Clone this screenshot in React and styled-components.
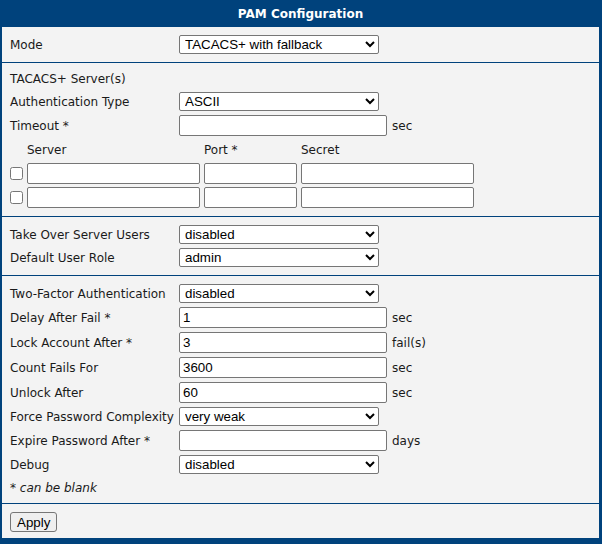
import React from 'react'
import styled, { createGlobalStyle } from 'styled-components'

const Global = createGlobalStyle`
    html, body {
        margin: 0;
        padding: 0;
        background: #ffffff;
    }
`

const Panel = styled.div`
    width: 602px;
    height: 544px;
    box-sizing: border-box;
    border-left: 2px solid #00427c;
    border-right: 3px solid #00427c;
    border-bottom: 6px solid #00427c;
    background-color: #f3f3f3;
    font-family: "DejaVu Sans", Verdana, sans-serif;
    font-size: 12px;
    color: #1a1a1a;
`

const Title = styled.div`
    height: 27px;
    background-color: #00427c;
    color: #ffffff;
    font-weight: bold;
    font-size: 12px;
    display: flex;
    align-items: center;
    justify-content: center;
`

const Section = styled.div`
    padding: ${p => p.$pad || '6px 8px'};
    border-top: ${p => (p.$first ? 'none' : '1px solid #00427c')};
`

const Row = styled.div`
    display: flex;
    align-items: center;
    height: ${p => p.$h || 23}px;
`

const Label = styled.div`
    width: 169px;
    flex-shrink: 0;
    white-space: nowrap;
`

const Select = styled.select`
    width: 200px;
    height: 19px;
    box-sizing: border-box;
    font-family: "Liberation Sans", Arial, sans-serif;
    font-size: 13.33px;
    color: #000;
    background: #fff;
    border: 1px solid #767676;
    border-radius: 2px;
    padding: 0 0 0 1px;
    margin: 0;
`

const Input = styled.input`
    width: ${p => p.$w || 208}px;
    height: 21px;
    box-sizing: border-box;
    font-family: "Liberation Sans", Arial, sans-serif;
    font-size: 13.33px;
    color: #000;
    background: #fff;
    border: 1px solid #767676;
    border-radius: 2px;
    padding: 1px 3px;
    margin: 0;
`

const Unit = styled.span`
    margin-left: 5px;
`

const ServerGrid = styled.div`
    display: grid;
    grid-template-columns: 13px 173px 93px 173px;
    grid-template-rows: 23px 24px 24px;
    column-gap: 4px;
    align-items: center;
`

const Head = styled.div`
    grid-column: ${p => p.$col};
`

const Check = styled.input`
    width: 13px;
    height: 13px;
    margin: 0;
`

const Note = styled.div`
    font-style: italic;
`

const Button = styled.button`
    height: 20px;
    padding: 0 6px;
    font-family: "Liberation Sans", Arial, sans-serif;
    font-size: 13.33px;
    color: #000;
    background: #efefef;
    border: 1px solid #767676;
    border-radius: 3px;
    margin: 0;
`

const SelectRow = ({ label, value }) => (
  <Row>
    <Label>{label}</Label>
    <Select defaultValue={value}>
      <option>{value}</option>
    </Select>
  </Row>
)

const InputRow = ({ label, value, unit }) => (
  <Row $h={25}>
    <Label>{label}</Label>
    <Input defaultValue={value} />
    {unit && <Unit>{unit}</Unit>}
  </Row>
)

const ServerRow = () => (
  <>
    <Check type="checkbox" />
    <Input $w={173} />
    <Input $w={93} />
    <Input $w={173} />
  </>
)

export default function App() {
  return (
    <>
      <Global />
      <Panel>
        <Title>PAM Configuration</Title>
        <Section $first>
          <SelectRow label="Mode" value="TACACS+ with fallback" />
        </Section>
        <Section $pad="4px 8px 7px">
          <Row>TACACS+ Server(s)</Row>
          <SelectRow label="Authentication Type" value="ASCII" />
          <InputRow label="Timeout *" value="" unit="sec" />
          <ServerGrid>
            <Head $col={2}>Server</Head>
            <Head $col={3}>Port *</Head>
            <Head $col={4}>Secret</Head>
            <ServerRow />
            <ServerRow />
          </ServerGrid>
        </Section>
        <Section>
          <SelectRow label="Take Over Server Users" value="disabled" />
          <SelectRow label="Default User Role" value="admin" />
        </Section>
        <Section $pad="6px 8px 4px">
          <SelectRow label="Two-Factor Authentication" value="disabled" />
          <InputRow label="Delay After Fail *" value="1" unit="sec" />
          <InputRow label="Lock Account After *" value="3" unit="fail(s)" />
          <InputRow label="Count Fails For" value="3600" unit="sec" />
          <InputRow label="Unlock After" value="60" unit="sec" />
          <SelectRow label="Force Password Complexity" value="very weak" />
          <InputRow label="Expire Password After *" value="" unit="days" />
          <SelectRow label="Debug" value="disabled" />
          <Row>
            <Note>* can be blank</Note>
          </Row>
        </Section>
        <Section $pad="8px 8px 6px">
          <Button>Apply</Button>
        </Section>
      </Panel>
    </>
  )
}
